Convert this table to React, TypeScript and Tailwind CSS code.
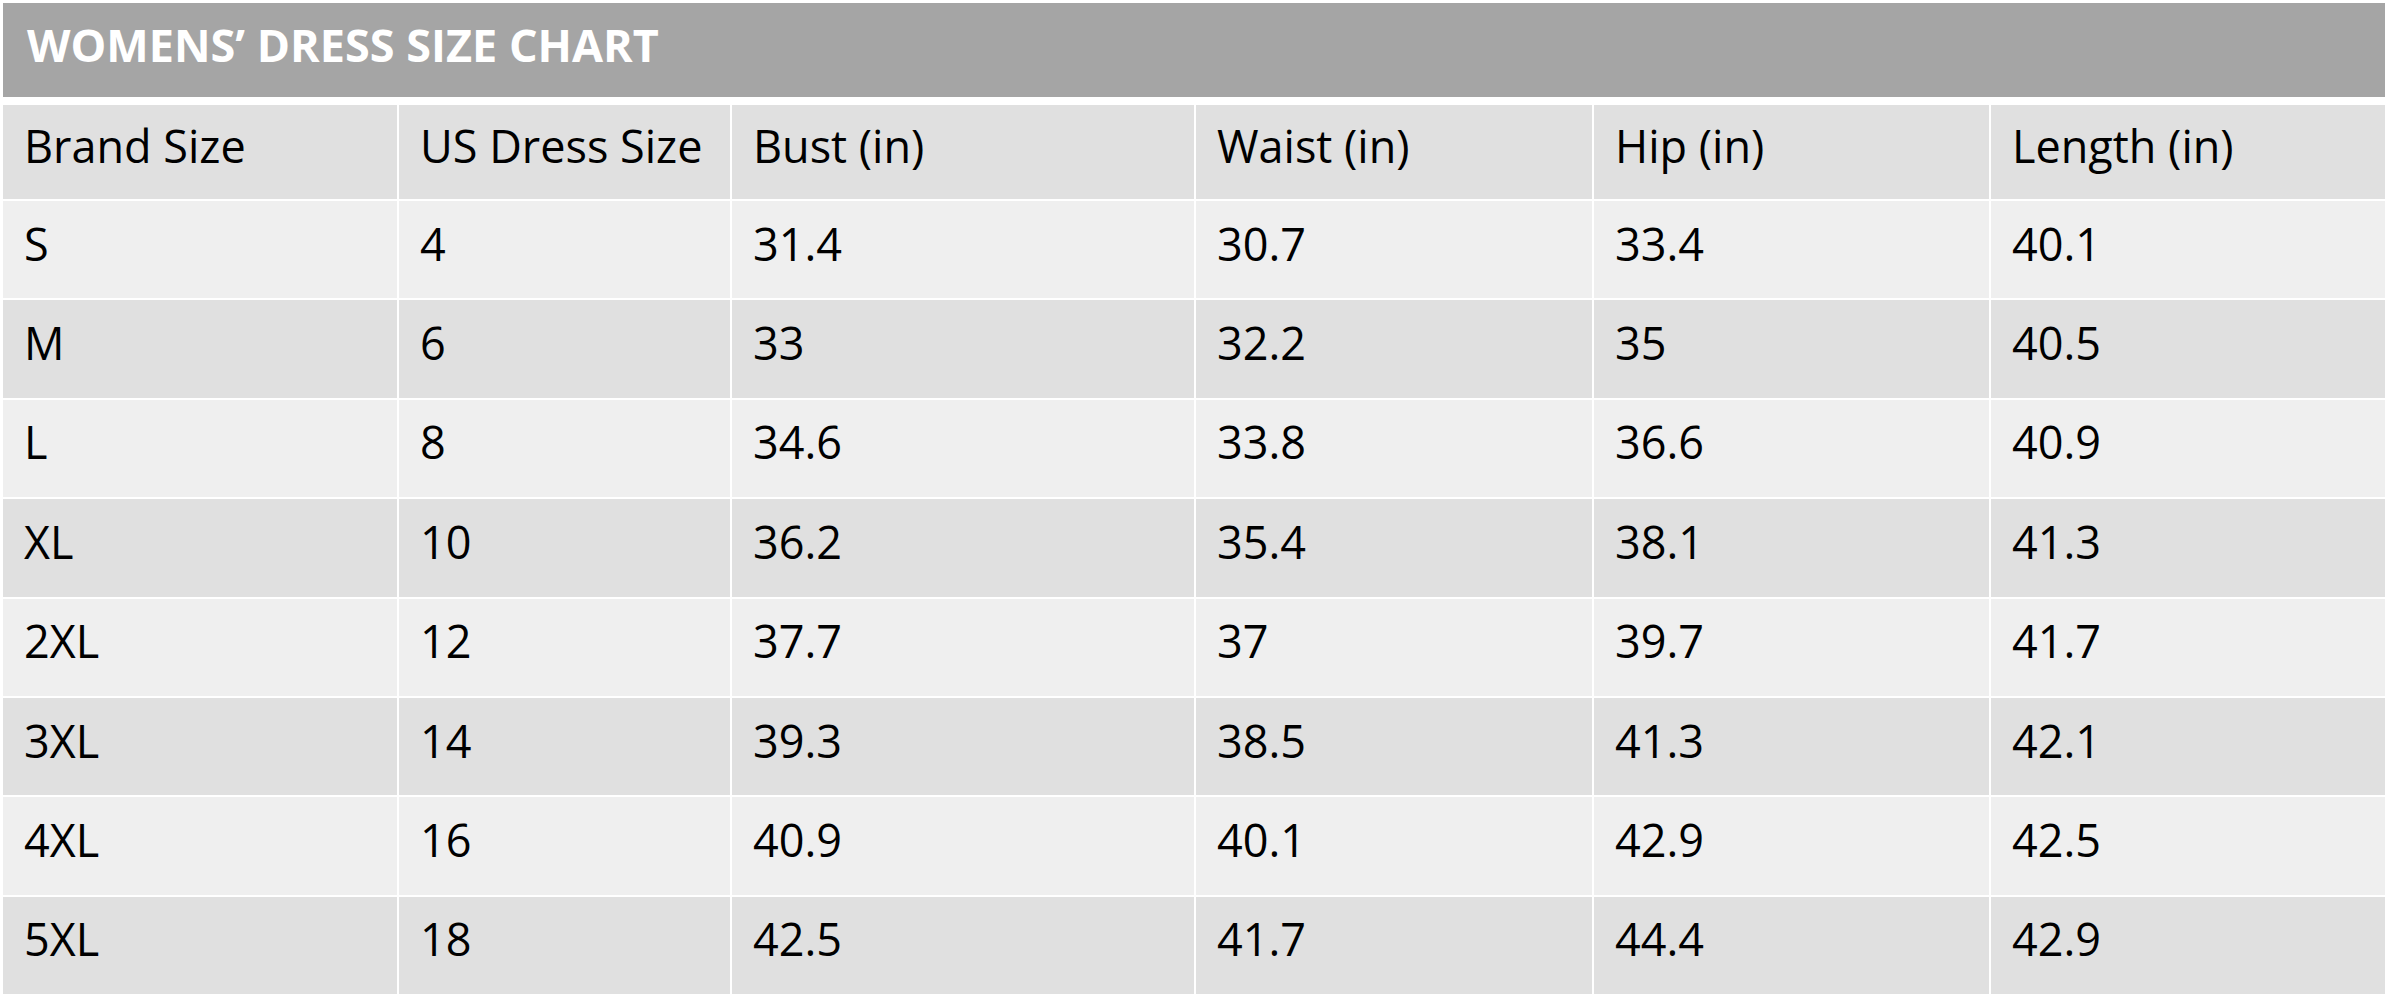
import React from "react";

const HEADERS = ["Brand Size", "US Dress Size", "Bust (in)", "Waist (in)", "Hip (in)", "Length (in)"];

const ROWS: string[][] = [
  ["S", "4", "31.4", "30.7", "33.4", "40.1"],
  ["M", "6", "33", "32.2", "35", "40.5"],
  ["L", "8", "34.6", "33.8", "36.6", "40.9"],
  ["XL", "10", "36.2", "35.4", "38.1", "41.3"],
  ["2XL", "12", "37.7", "37", "39.7", "41.7"],
  ["3XL", "14", "39.3", "38.5", "41.3", "42.1"],
  ["4XL", "16", "40.9", "40.1", "42.9", "42.5"],
  ["5XL", "18", "42.5", "41.7", "44.4", "42.9"],
];

function Cell({ text, dark }: { text: string; dark: boolean }) {
  return (
    <div
      className={`flex items-center pl-[21px] pb-[12px] text-[45px] leading-[62px] text-black ${
        dark ? "bg-[#e0e0e0]" : "bg-[#efefef]"
      }`}
    >
      {text}
    </div>
  );
}

export default function App() {
  return (
    <div
      className="w-[2390px] h-[1000px] bg-white pt-[3px] pl-[3px]"
      style={{ fontFamily: '"Open Sans", "Noto Sans", sans-serif' }}
    >
      <div className="w-[2382px] h-[94px] bg-[#a5a5a5] flex items-center pl-[24px] pb-[10px]">
        <span className="text-white font-bold text-[45px] leading-[62px]">WOMENS’ DRESS SIZE CHART</span>
      </div>
      <div className="mt-[8px] w-[2382px] h-[889px] grid grid-cols-[394px_331px_462px_396px_395px_394px] grid-rows-[94px_repeat(8,minmax(0,1fr))] gap-[2px]">
        {HEADERS.map((h) => (
          <Cell key={h} text={h} dark />
        ))}
        {ROWS.map((r, i) =>
          r.map((v, j) => <Cell key={`${i}-${j}`} text={v} dark={i % 2 === 1} />)
        )}
      </div>
    </div>
  );
}
